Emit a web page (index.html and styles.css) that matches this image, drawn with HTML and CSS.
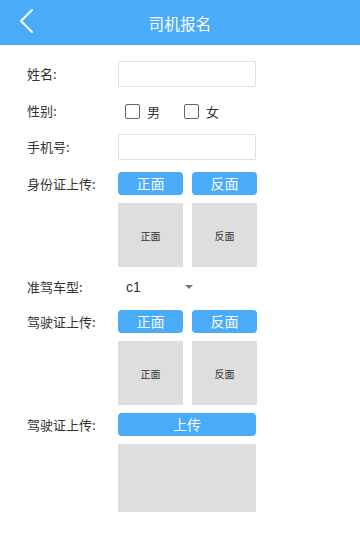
FILE: index.html
```html
<!DOCTYPE html>
<html lang="zh">
<head>
<meta charset="utf-8">
<title>司机报名</title>
<link rel="stylesheet" href="styles.css">
</head>
<body>
<header class="topbar">
  <svg class="back" width="16" height="26" viewBox="0 0 16 26"><polyline points="13,2 2,13 13,24" fill="none" stroke="#fff" stroke-width="2" stroke-linecap="round" stroke-linejoin="round"/></svg>
  <h1 class="title">司机报名</h1>
</header>
<main class="form">
  <div class="row row-input">
    <span class="label">姓名:</span>
    <div class="input"></div>
  </div>
  <div class="row row-sex">
    <span class="label">性别:</span>
    <div class="options">
      <span class="opt"><span class="box"></span>男</span>
      <span class="opt"><span class="box"></span>女</span>
    </div>
  </div>
  <div class="row row-input">
    <span class="label">手机号:</span>
    <div class="input"></div>
  </div>
  <div class="row row-upload">
    <span class="label">身份证上传:</span>
    <div class="grid">
      <div class="btn">正面</div>
      <div class="btn">反面</div>
      <div class="pic">正面</div>
      <div class="pic">反面</div>
    </div>
  </div>
  <div class="row row-select">
    <span class="label">准驾车型:</span>
    <div class="select"><span class="val">c1</span><span class="caret"></span></div>
  </div>
  <div class="row row-upload">
    <span class="label">驾驶证上传:</span>
    <div class="grid">
      <div class="btn">正面</div>
      <div class="btn">反面</div>
      <div class="pic">正面</div>
      <div class="pic">反面</div>
    </div>
  </div>
  <div class="row row-upload row-last">
    <span class="label">驾驶证上传:</span>
    <div class="single">
      <div class="btn wide">上传</div>
      <div class="pic wide tall"></div>
    </div>
  </div>
</main>
</body>
</html>
```

FILE: styles.css
```css
* { box-sizing: border-box; }
html, body { margin: 0; padding: 0; background: #fff; }
body {
  font-family: "Noto Sans CJK SC", "Noto Sans", "Liberation Sans", sans-serif;
  color: #333;
  width: 360px;
}
.topbar {
  height: 45px;
  background: #4aabf8;
  display: flex;
  align-items: center;
  justify-content: center;
  position: relative;
}
.back {
  position: absolute;
  left: 19px;
  top: 8px;
}
.title {
  margin: 0;
  font-size: 15.5px;
  font-weight: 400;
  color: #fff;
  letter-spacing: 0.3px;
}
.form {
  padding: 16px 0 0 27px;
  display: flex;
  flex-direction: column;
}
.row {
  display: flex;
  align-items: center;
}
.label {
  width: 91px;
  flex: none;
  font-size: 13px;
  line-height: 24px;
  color: #333;
}
.row-input { height: 26px; margin-bottom: 12px; }
.input {
  width: 138px;
  height: 26px;
  border: 1px solid #e0e0e0;
  border-radius: 1px;
}
.row-sex { height: 24px; margin-bottom: 11px; }
.options { display: flex; gap: 24px; padding-left: 7px; }
.opt {
  display: flex;
  align-items: center;
  gap: 7px;
  font-size: 13px;
  color: #333;
}
.box {
  width: 15px;
  height: 15px;
  border: 1.5px solid #666;
  border-radius: 2px;
}
.row-upload { align-items: flex-start; margin-bottom: 8px; }
.row-upload .label { line-height: 23px; }
.grid {
  display: grid;
  grid-template-columns: 65px 65px;
  column-gap: 9px;
  row-gap: 8px;
}
.btn {
  height: 23px;
  background: #4aabf8;
  color: #fff;
  border-radius: 4px;
  font-size: 14px;
  line-height: 23px;
  text-align: center;
}
.pic {
  height: 64px;
  background: #dedede;
  color: #333;
  font-size: 10px;
  display: flex;
  align-items: center;
  justify-content: center;
}
.single { display: flex; flex-direction: column; gap: 8px; }
.wide { width: 138px; }
.tall { height: 68px; }
.row-select { height: 24px; margin-bottom: 11px; }
.select {
  display: flex;
  align-items: center;
  padding-left: 8px;
  font-size: 14px;
  color: #333;
}
.val { font-family: "Liberation Sans", "Noto Sans CJK SC", sans-serif; }
.caret {
  margin-left: 44px;
  width: 0;
  height: 0;
  border-left: 4px solid transparent;
  border-right: 4px solid transparent;
  border-top: 4px solid #777;
}
```
